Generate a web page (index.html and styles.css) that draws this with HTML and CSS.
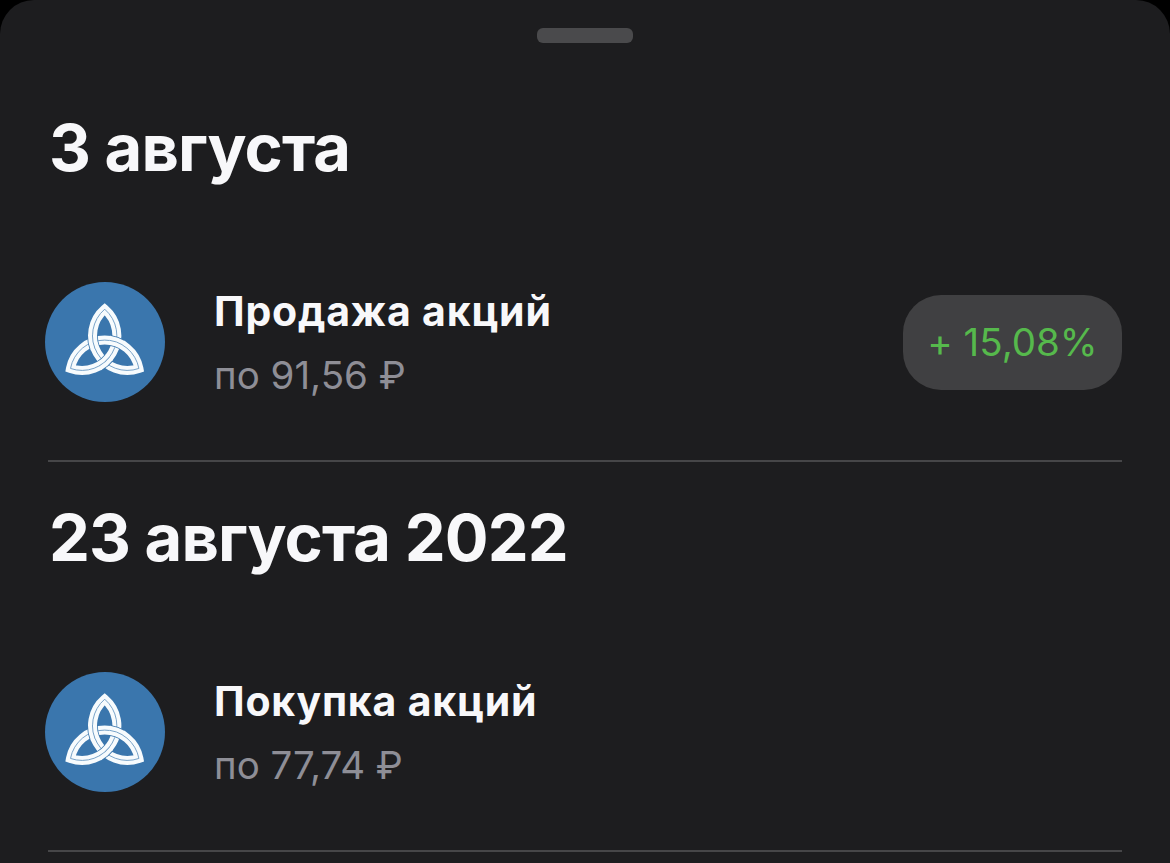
FILE: index.html
```html
<!DOCTYPE html>
<html lang="ru">
<head>
  <meta charset="UTF-8">
  <meta name="viewport" content="width=device-width, initial-scale=1.0">
  <title>Сделки</title>
  <link rel="stylesheet" href="styles.css">
</head>
<body>
  <svg class="defs" width="0" height="0">
    <defs>
      <g id="over">
        <path class="gap" d="M65.5 58.5A34.8 34.8 0 0 1 76.9 62.5"/>
        <path class="band" d="M64.5 58.3A34.8 34.8 0 0 1 77.8 63"/>
        <path class="line" d="M64.5 58.3A34.8 34.8 0 0 1 77.8 63"/>
      </g>
      <symbol id="logo" viewBox="0 0 120 120">
        <circle cx="60" cy="60" r="60" fill="#3a76ad"/>
        <path class="band" d="M59.7 27.2A34.8 34.8 0 0 1 25.5 86.45A34.8 34.8 0 0 1 93.9 86.45A34.8 34.8 0 0 1 59.7 27.2Z"/>
        <path class="line" d="M59.7 27.2A34.8 34.8 0 0 1 25.5 86.45A34.8 34.8 0 0 1 93.9 86.45A34.8 34.8 0 0 1 59.7 27.2Z"/>
        <use href="#over"/>
        <use href="#over" transform="rotate(120 59.7 66.7)"/>
        <use href="#over" transform="rotate(240 59.7 66.7)"/>
      </symbol>
    </defs>
  </svg>

  <main class="sheet">
    <div class="handle"></div>

    <section class="day">
      <h2>3 августа</h2>
      <div class="deal">
        <svg class="logo"><use href="#logo"/></svg>
        <div class="info">
          <div class="title">Продажа акций</div>
          <div class="price">по 91,56 ₽</div>
        </div>
        <div class="profit">+ 15,08%</div>
      </div>
    </section>

    <section class="day">
      <h2>23 августа 2022</h2>
      <div class="deal">
        <svg class="logo"><use href="#logo"/></svg>
        <div class="info">
          <div class="title">Покупка акций</div>
          <div class="price">по 77,74 ₽</div>
        </div>
      </div>
    </section>
  </main>
</body>
</html>
```
FILE: styles.css
```css
* { margin: 0; padding: 0; box-sizing: border-box; }
body {
  font-family: Inter, sans-serif;
  background: #000;
  color: #f8f8fa;
  overflow: hidden;
}
.defs {
  display: block;
}
.sheet {
  height: 863px;
  padding: 28px 48px 0;
  background: #1d1d1f;
  border-radius: 34px 34px 0 0;
  overflow: hidden;
}
.handle {
  width: 96px;
  height: 15px;
  margin: 0 auto 29px;
  border-radius: 6px;
  background: #4a4a4c;
}
.day {
  height: 390px;
  padding-top: 36px;
  border-bottom: 2px solid #464648;
}
h2 {
  height: 80px;
  padding-left: 1px;
  line-height: 80px;
  font-size: 65px;
  font-weight: 700;
  letter-spacing: -0.9px;
  white-space: nowrap;
}
.deal {
  display: flex;
  align-items: center;
  height: 120px;
  margin: 94px 0 0 -3px;
}
.logo {
  width: 120px;
  height: 120px;
}
.info {
  margin-left: 49px;
  padding-top: 5px;
  white-space: nowrap;
}
.title {
  font-size: 41px;
  line-height: 60px;
  font-weight: 700;
  letter-spacing: 0.8px;
}
.price {
  font-size: 38.5px;
  line-height: 68px;
  color: #8e8e96;
}
.profit {
  display: flex;
  align-items: center;
  justify-content: center;
  width: 219px;
  height: 95px;
  margin-left: auto;
  border-radius: 38px;
  background: #404042;
  color: #56b94c;
  font-size: 38.5px;
  font-feature-settings: "calt" 0;
  white-space: nowrap;
}
.band {
  fill: none;
  stroke: #f7fbfd;
  stroke-width: 9;
  stroke-miterlimit: 10;
}
.line {
  fill: none;
  stroke: #6a98c2;
  stroke-width: 0.9;
}
.gap {
  fill: none;
  stroke: #3a76ad;
  stroke-width: 10.6;
}
```
